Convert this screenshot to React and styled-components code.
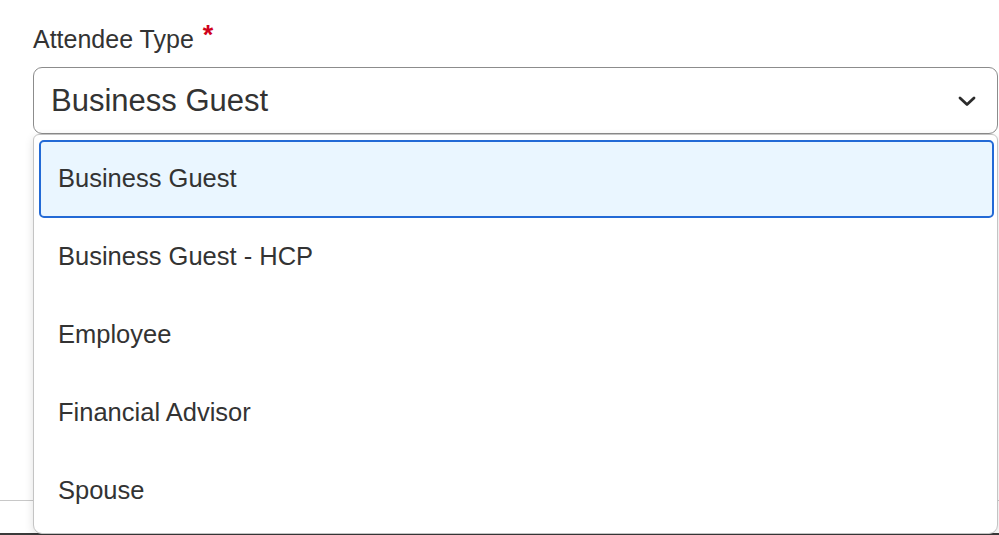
import React, { useState } from 'react';
import styled, { createGlobalStyle } from 'styled-components';

const GlobalStyle = createGlobalStyle`
  html, body {
    margin: 0;
    padding: 0;
    background: #ffffff;
  }
  body {
    font-family: "Liberation Sans", Arial, Helvetica, sans-serif;
    color: #333333;
    overflow: hidden;
  }
`;

const options = [
  'Business Guest',
  'Business Guest - HCP',
  'Employee',
  'Financial Advisor',
  'Spouse',
];

const Page = styled.div`
  width: 999px;
  height: 535px;
  position: relative;
  overflow: hidden;
  display: flex;
  flex-direction: column;
`;

const Field = styled.div`
  padding: 24px 1px 0 33px;
  display: flex;
  flex-direction: column;
  gap: 13px;
  position: relative;
  z-index: 2;
`;

const Label = styled.label`
  font-size: 25px;
  line-height: 30px;
  color: #333333;
  display: flex;
  align-items: flex-start;
  gap: 9px;
`;

const Required = styled.span`
  color: #d0021b;
  font-size: 27px;
  line-height: 22px;
  font-weight: 700;
`;

const SelectWrap = styled.div`
  position: relative;
`;

const SelectBox = styled.div`
  box-sizing: border-box;
  height: 67px;
  border: 1px solid #8c8c8c;
  border-radius: 9px;
  display: flex;
  align-items: center;
  justify-content: space-between;
  padding: 0 20px 0 17px;
  background: #ffffff;
`;

const Value = styled.span`
  font-size: 31px;
  color: #333333;
`;

const Menu = styled.ul`
  position: absolute;
  top: 100%;
  left: 0;
  right: 0;
  box-sizing: border-box;
  height: 400px;
  margin: 0;
  padding: 5px 3px 0 5px;
  list-style: none;
  background: #ffffff;
  border: 1px solid #c4c4c4;
  border-radius: 6px 6px 9px 9px;
  box-shadow: 0 3px 10px rgba(0, 0, 0, 0.12);
`;

const Option = styled.li`
  box-sizing: border-box;
  height: 78px;
  display: flex;
  align-items: center;
  padding: 0 17px 2px;
  font-size: 25.5px;
  color: #333333;
  border: 2px solid ${(p) => (p.$active ? '#236ad6' : 'transparent')};
  border-radius: 5px;
  background: ${(p) => (p.$active ? '#eaf6ff' : 'transparent')};
`;

const Behind = styled.div`
  flex: 1;
  display: flex;
  flex-direction: column;
  justify-content: flex-end;
`;

const Divider = styled.div`
  height: 1px;
  background: #c8c8c8;
  margin-bottom: 32px;
`;

const BottomBar = styled.div`
  height: 2px;
  background: #3a3a3a;
`;

const Chevron = () => (
  <svg width="20" height="12" viewBox="0 0 20 12" fill="none">
    <path
      d="M3 3 L10 9.5 L17 3"
      stroke="#2b2b2b"
      strokeWidth="2.8"
      strokeLinecap="round"
      strokeLinejoin="round"
    />
  </svg>
);

export default function App() {
  const [selected] = useState('Business Guest');
  return (
    <Page>
      <GlobalStyle />
      <Field>
        <Label>
          Attendee Type
          <Required>*</Required>
        </Label>
        <SelectWrap>
          <SelectBox>
            <Value>{selected}</Value>
            <Chevron />
          </SelectBox>
          <Menu>
            {options.map((o) => (
              <Option key={o} $active={o === selected}>
                {o}
              </Option>
            ))}
          </Menu>
        </SelectWrap>
      </Field>
      <Behind>
        <Divider />
        <BottomBar />
      </Behind>
    </Page>
  );
}
